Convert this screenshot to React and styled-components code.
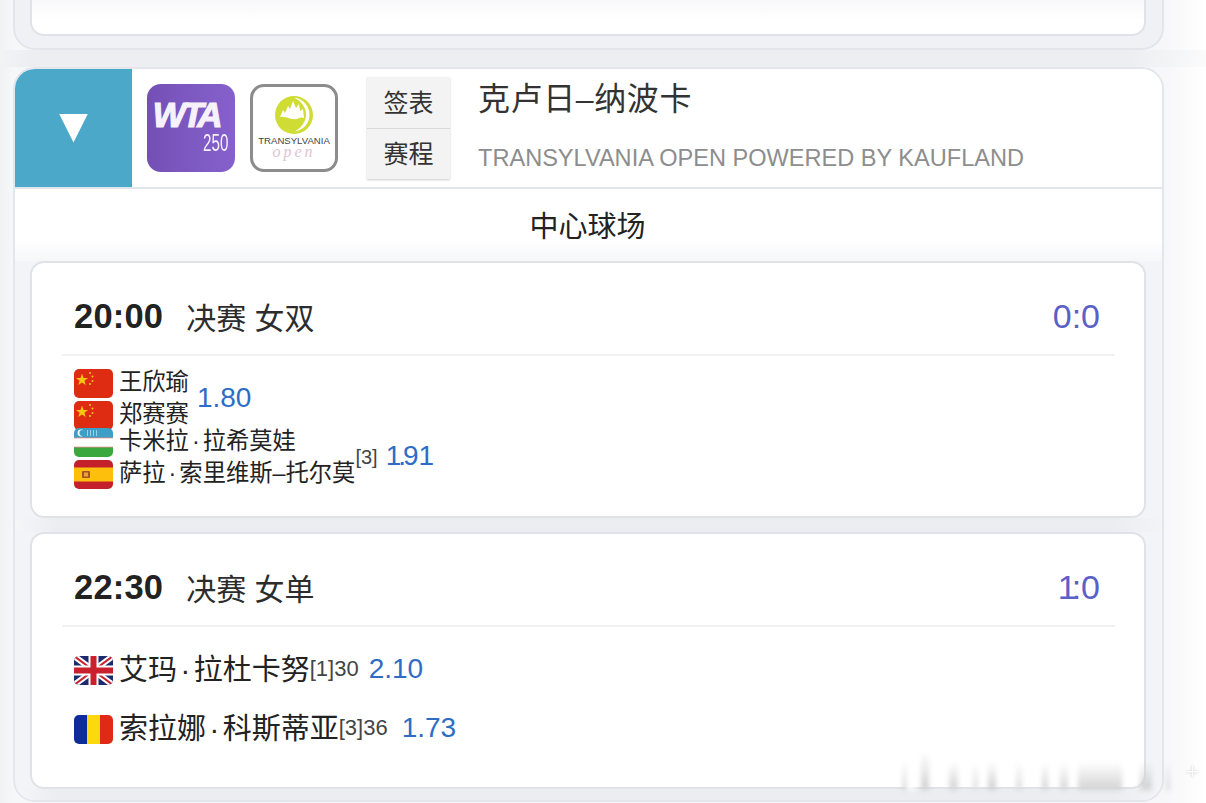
import React from 'react';
import styled, { createGlobalStyle } from 'styled-components';

const GlobalStyle = createGlobalStyle`
  html, body {
    margin: 0;
    padding: 0;
    background: #fff;
  }
  body {
    font-family: "Liberation Sans", "Noto Sans CJK SC", sans-serif;
  }
`;

const Page = styled.div`
  position: relative;
  width: 1206px;
  height: 803px;
  overflow: hidden;
  background: linear-gradient(90deg, #f1f2f4 0, #f6f7f8 13px, #f7f7f9 1165px, #fbfbfc 1185px, #fff 1206px);
`;

const PrevSection = styled.div`
  box-sizing: border-box;
  width: 1151px;
  height: 50px;
  margin-left: 13px;
  padding: 0 16px 12px 15px;
  border: 2px solid #e2e5ec;
  border-top: 0;
  border-radius: 0 0 22px 22px;
  background: #f0f1f4;
`;

const PrevCard = styled.div`
  box-sizing: border-box;
  height: 100%;
  background: linear-gradient(180deg, #f8f8fa 0, #fff 60%);
  border: 2px solid #e0e2e8;
  border-top: 0;
  border-radius: 0 0 14px 14px;
`;

const Gap = styled.div`
  height: 17px;
  background: linear-gradient(90deg, #f2f3f5 0, #eceef2 30px, #eceef2 1130px, #f4f5f6 1175px, #fbfbfc 1206px);
`;

const Section = styled.section`
  box-sizing: border-box;
  width: 1151px;
  height: 735px;
  margin-left: 13px;
  border: 2px solid #e3e6ed;
  border-radius: 22px;
  background: #f3f4f7;
  overflow: hidden;
`;

const Header = styled.header`
  display: flex;
  align-items: center;
  height: 118px;
  background: #fff;
  border-bottom: 2px solid #e3e5ec;
`;

const Toggle = styled.div`
  flex: none;
  display: flex;
  align-items: center;
  justify-content: center;
  width: 117px;
  height: 100%;
  background: #4ba8c8;
`;

const Triangle = styled.div`
  width: 29px;
  height: 29px;
  background: #fff;
  clip-path: polygon(0 0, 100% 0, 50% 100%);
`;

const WtaLogo = styled.div`
  flex: none;
  box-sizing: border-box;
  display: flex;
  flex-direction: column;
  align-items: flex-end;
  width: 88px;
  height: 88px;
  margin-left: 15px;
  padding: 14px 7px 0 0;
  border-radius: 14px;
  background: linear-gradient(90deg, #7450b5, #8661cd);
  color: #f6f1fb;
`;

const WtaName = styled.div`
  font-size: 35px;
  font-weight: 700;
  font-style: italic;
  line-height: 34px;
  letter-spacing: -3.6px;
  margin-right: 9px;
  -webkit-text-stroke: 1.2px #f6f1fb;
`;

const WtaLevel = styled.div`
  font-size: 23px;
  line-height: 22px;
  transform: scaleX(0.66);
  transform-origin: right center;
`;

const OpenLogo = styled.div`
  flex: none;
  box-sizing: border-box;
  display: flex;
  flex-direction: column;
  align-items: center;
  width: 88px;
  height: 88px;
  margin-left: 15px;
  padding-top: 9px;
  border: 3px solid #8c8c8c;
  border-radius: 14px;
  background: #fff;
`;

const OpenName = styled.div`
  margin-top: 2px;
  font-size: 9.6px;
  line-height: 10px;
  color: #444;
  white-space: nowrap;
`;

const OpenScript = styled.div`
  font-family: "Liberation Serif", serif;
  font-style: italic;
  font-size: 16px;
  line-height: 11px;
  letter-spacing: 3px;
  color: #dfc3d3;
`;

const Tabs = styled.div`
  flex: none;
  display: flex;
  flex-direction: column;
  width: 83px;
  margin-left: 29px;
  box-shadow: 0 1px 2px rgba(0, 0, 0, 0.2);
`;

const Tab = styled.div`
  box-sizing: border-box;
  height: 51px;
  background: #f3f3f3;
  color: #333;
  font-size: 25px;
  line-height: 52px;
  text-align: center;
  & + & {
    border-top: 1px solid #d9d9d9;
    line-height: 50px;
  }
`;

const TitleBlock = styled.div`
  display: flex;
  flex-direction: column;
  margin-left: 28px;
`;

const Title = styled.div`
  height: 60px;
  font-size: 32px;
  line-height: 32px;
  letter-spacing: 0.6px;
  color: #333;
`;

const Subtitle = styled.div`
  font-size: 23.57px;
  line-height: 30px;
  color: #8d8d8d;
  white-space: nowrap;
`;

const CourtName = styled.div`
  height: 72px;
  background: linear-gradient(180deg, #fff 0, #fff 52px, #f6f7f9 72px);
  color: #222;
  font-size: 29px;
  line-height: 76px;
  text-align: center;
  padding-right: 2px;
`;

const Card = styled.article`
  box-sizing: border-box;
  height: 257px;
  margin: 0 16px 0 15px;
  padding: 0 29px 0 30px;
  border: 2px solid #e0e2e8;
  border-radius: 14px;
  background: #fff;
`;

const CardGap = styled.div`
  height: 14px;
  background: linear-gradient(90deg, #f5f6f8 0, #ebedf1 40px, #ebedf1 1100px, #f3f4f6 100%);
`;

const MatchHead = styled.div`
  box-sizing: border-box;
  display: flex;
  align-items: center;
  height: 93px;
  padding: 16px 15px 0 12px;
  border-bottom: 2px solid #f0f1f3;
`;

const Time = styled.div`
  font-size: 34.5px;
  font-weight: 700;
  letter-spacing: 0.2px;
  color: #222;
`;

const Round = styled.div`
  flex: 1;
  margin: 0 0 2px 23px;
  font-size: 30px;
  color: #2c2c2c;
`;

const Score = styled.div`
  font-size: 34px;
  color: #5a60c6;
`;

const Narrow = styled.span`
  letter-spacing: ${(p) => p.$by}px;
`;

const MatchBody = styled.div`
  padding: ${(p) => p.$top}px 0 0 12px;
`;

const Pair = styled.div`
  display: flex;
  align-items: center;
  height: 59px;
`;

const Names = styled.div`
  display: flex;
  flex-direction: column;
  gap: 5px;
`;

const Row = styled.div`
  display: flex;
  align-items: flex-start;
  height: 27px;
`;

const SingleRow = styled.div`
  display: flex;
  align-items: center;
  height: 59px;
`;

const FlagBox = styled.div`
  flex: none;
  display: flex;
  width: 39px;
  height: 29px;
  margin: ${(p) => p.$top || 0}px 6px 0 0;
  border-radius: 5px;
  overflow: hidden;
`;

const PlayerName = styled.span`
  font-size: 23.3px;
  line-height: 27px;
  color: #222;
  white-space: nowrap;
`;

const BigName = styled.span`
  margin-bottom: 4px;
  font-size: 29px;
  color: #222;
  white-space: nowrap;
`;

const Dot = styled.span`
  margin: 0 ${(p) => p.$space}px;
`;

const Seed = styled.sup`
  position: relative;
  top: -17px;
  font-size: 20px;
  line-height: 0;
  vertical-align: baseline;
  color: #444;
`;

const Rank = styled.span`
  font-size: 22px;
  color: #444;
  white-space: nowrap;
`;

const Odds = styled.span`
  margin-left: ${(p) => p.$gap || 9}px;
  margin-bottom: ${(p) => p.$lift || 0}px;
  font-size: 28px;
  color: #2f6cc6;
`;

const Watermark = styled.div`
  position: absolute;
  left: 895px;
  top: 752px;
  display: flex;
  align-items: flex-end;
  height: 38px;
  filter: blur(2.5px);
`;

const WaterBar = styled.div`
  width: ${(p) => p.$w}px;
  height: ${(p) => p.$h}px;
  margin-left: ${(p) => p.$x}px;
  background: linear-gradient(180deg, transparent, ${(p) => p.$c});
`;

const Plus = styled.div`
  position: absolute;
  left: 1186px;
  top: 754px;
  font-size: 22px;
  line-height: 36px;
  color: #fff;
  text-shadow: 0 0 2px #bbb;
`;

const ChinaFlag = () => (
  <svg width="39" height="29" viewBox="0 0 39 29">
    <rect width="39" height="29" fill="#de2c12" />
    <polygon points="8,4.5 9.5,9 14,9 10.4,11.7 11.8,16 8,13.4 4.2,16 5.6,11.7 2,9 6.5,9" fill="#f9c80e" />
    <circle cx="16" cy="4" r="1" fill="#f9c80e" />
    <circle cx="18.5" cy="7.5" r="1" fill="#f9c80e" />
    <circle cx="18.5" cy="12" r="1" fill="#f9c80e" />
    <circle cx="16" cy="15" r="1" fill="#f9c80e" />
  </svg>
);

const UzbekFlag = () => (
  <svg width="39" height="29" viewBox="0 0 39 29">
    <rect width="39" height="10" fill="#3c9fc6" />
    <rect y="10" width="39" height="9" fill="#fff" />
    <rect y="19" width="39" height="10" fill="#3aa83c" />
    <rect y="9.5" width="39" height="0.8" fill="#d88" />
    <rect y="18.7" width="39" height="0.8" fill="#d88" />
    <circle cx="7" cy="5" r="3.4" fill="#fff" />
    <circle cx="8.4" cy="5" r="3" fill="#3c9fc6" />
    <path d="M13 3h1M16 3h1M19 3h1M22 3h1M13 5h1M16 5h1M19 5h1M22 5h1M13 7h1M16 7h1M19 7h1M22 7h1" stroke="#fff" strokeWidth="1" />
  </svg>
);

const SpainFlag = () => (
  <svg width="39" height="29" viewBox="0 0 39 29">
    <rect width="39" height="29" fill="#c4202c" />
    <rect y="7.5" width="39" height="14" fill="#fdbf0b" />
    <rect x="8" y="11" width="8" height="7" rx="1" fill="#a5522a" />
    <rect x="10" y="12.5" width="4" height="4" fill="#e8a33a" />
  </svg>
);

const UkFlag = () => (
  <svg width="39" height="29" viewBox="0 0 39 29">
    <rect width="39" height="29" fill="#1d2b6e" />
    <path d="M0 0L39 29M39 0L0 29" stroke="#fff" strokeWidth="6" />
    <path d="M0 0L39 29M39 0L0 29" stroke="#c8202c" strokeWidth="2" />
    <path d="M19.5 0V29M0 14.5H39" stroke="#fff" strokeWidth="10" />
    <path d="M19.5 0V29M0 14.5H39" stroke="#c8202c" strokeWidth="6" />
  </svg>
);

const RomaniaFlag = () => (
  <svg width="39" height="29" viewBox="0 0 39 29">
    <rect width="13" height="29" fill="#0f2c9c" />
    <rect x="13" width="13" height="29" fill="#fcd80c" />
    <rect x="26" width="13" height="29" fill="#e02a16" />
  </svg>
);

const OpenEmblem = () => (
  <svg width="38" height="38" viewBox="0 0 38 38">
    <circle cx="19" cy="19" r="19" fill="#cfdc33" />
    <path d="M19 1.5C29 3 35 11 34.5 19.5C34 28 28 34 20 35.5C27 31 31 25.5 31 18.5C31 11 26 5 19 1.5Z" fill="#fff" />
    <path d="M5 21L8 14L10 17L13 10L15 13L18 5L21 12L24 8L25 15L28 13L29 22C25 20 24 24 17 23C12 22 9 20 5 21Z" fill="#fff" />
  </svg>
);

const watermarkBars = [
  { x: 8, w: 3, h: 30, c: '#c9c9c9' },
  { x: 0, w: 9, h: 30, c: '#ffffff' },
  { x: 6, w: 8, h: 38, c: '#cfcfcf' },
  { x: 20, w: 9, h: 28, c: '#d3d3d3' },
  { x: 15, w: 5, h: 28, c: '#dddddd' },
  { x: 10, w: 8, h: 28, c: '#cdcdcd' },
  { x: 20, w: 6, h: 28, c: '#dcdcdc' },
  { x: 20, w: 6, h: 28, c: '#d3d3d3' },
  { x: 12, w: 8, h: 28, c: '#d6d6d6' },
  { x: 10, w: 44, h: 28, c: '#d2d2d2' },
  { x: 18, w: 12, h: 28, c: '#cfcfcf' },
  { x: 14, w: 4, h: 28, c: '#dadada' },
];

const App = () => (
  <Page>
    <GlobalStyle />
    <PrevSection>
      <PrevCard />
    </PrevSection>
    <Gap />
    <Section>
      <Header>
        <Toggle>
          <Triangle />
        </Toggle>
        <WtaLogo>
          <WtaName>WTA</WtaName>
          <WtaLevel>250</WtaLevel>
        </WtaLogo>
        <OpenLogo>
          <OpenEmblem />
          <OpenName>TRANSYLVANIA</OpenName>
          <OpenScript>open</OpenScript>
        </OpenLogo>
        <Tabs>
          <Tab>签表</Tab>
          <Tab>赛程</Tab>
        </Tabs>
        <TitleBlock>
          <Title>克卢日–纳波卡</Title>
          <Subtitle>TRANSYLVANIA OPEN POWERED BY KAUFLAND</Subtitle>
        </TitleBlock>
      </Header>
      <CourtName>中心球场</CourtName>
      <Card>
        <MatchHead>
          <Time>20:00</Time>
          <Round>决赛 女双</Round>
          <Score>0:0</Score>
        </MatchHead>
        <MatchBody $top={13}>
          <Pair>
            <Names>
              <Row>
                <FlagBox><ChinaFlag /></FlagBox>
                <PlayerName>王欣瑜</PlayerName>
              </Row>
              <Row>
                <FlagBox><ChinaFlag /></FlagBox>
                <PlayerName>郑赛赛</PlayerName>
              </Row>
            </Names>
            <Odds $gap={8} $lift={2}>1.80</Odds>
          </Pair>
          <Pair>
            <Names>
              <Row>
                <FlagBox><UzbekFlag /></FlagBox>
                <PlayerName>卡米拉<Dot $space={3}>·</Dot>拉希莫娃</PlayerName>
              </Row>
              <Row>
                <FlagBox><SpainFlag /></FlagBox>
                <PlayerName>萨拉<Dot $space={3}>·</Dot>索里维斯–托尔莫<Seed>[3]</Seed></PlayerName>
              </Row>
            </Names>
            <Odds $gap={8} $lift={3}><Narrow $by={-3}>1.</Narrow>91</Odds>
          </Pair>
        </MatchBody>
      </Card>
      <CardGap />
      <Card>
        <MatchHead>
          <Time>22:30</Time>
          <Round>决赛 女单</Round>
          <Score><Narrow $by={-5}>1</Narrow>:0</Score>
        </MatchHead>
        <MatchBody $top={12}>
          <SingleRow>
            <FlagBox $top={3}><UkFlag /></FlagBox>
            <BigName>艾玛<Dot $space={3.5}>·</Dot>拉杜卡努</BigName>
            <Rank>[1]30</Rank>
            <Odds $gap={10}>2.10</Odds>
          </SingleRow>
          <SingleRow>
            <FlagBox $top={3}><RomaniaFlag /></FlagBox>
            <BigName>索拉娜<Dot $space={3.5}>·</Dot>科斯蒂亚</BigName>
            <Rank>[3]36</Rank>
            <Odds $gap={14}>1.73</Odds>
          </SingleRow>
        </MatchBody>
      </Card>
      <CardGap />
    </Section>
    <Watermark>
      {watermarkBars.map((bar, i) => (
        <WaterBar key={i} $x={bar.x} $w={bar.w} $h={bar.h} $c={bar.c} />
      ))}
    </Watermark>
    <Plus>+</Plus>
  </Page>
);

export default App;
